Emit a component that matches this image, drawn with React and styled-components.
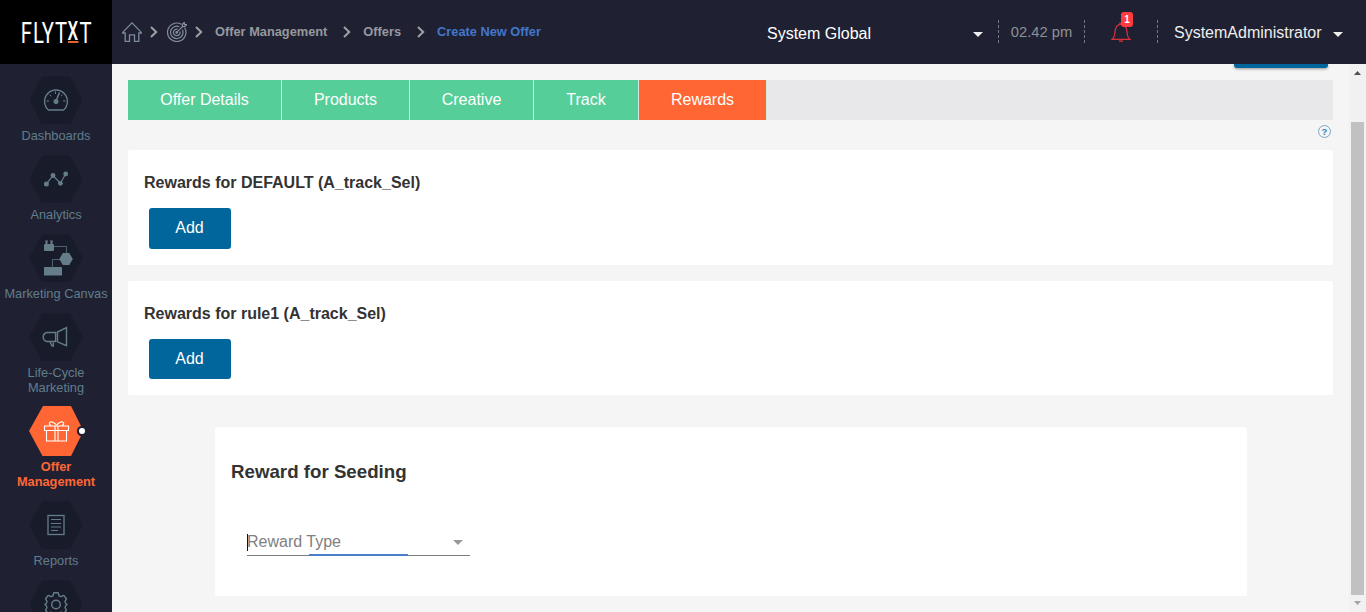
import React from "react";
import styled, { createGlobalStyle } from "styled-components";

const GlobalStyle = createGlobalStyle`
  * { box-sizing: border-box; }
  body {
    margin: 0;
    overflow: hidden;
    font-family: "Liberation Sans", Arial, sans-serif;
    font-size: 16px;
    background: #f5f5f5;
  }
  svg { display: block; flex: none; }
`;

const Page = styled.div`
  display: grid;
  grid-template: 64px 548px / 112px 1fr;
  width: 1366px;
  height: 612px;
  overflow: hidden;
`;

const LogoBox = styled.div`
  background: #000;
`;

const Header = styled.header`
  display: flex;
  align-items: center;
  background: #1f2132;
  color: #fff;
  white-space: nowrap;
`;

const Crumbs = styled.nav`
  display: flex;
  align-items: center;
  width: 655px;
  padding-left: 10px;
`;

const Crumb = styled.span`
  font-size: 12.8px;
  line-height: 16px;
  font-weight: bold;
  color: ${(p) => (p.$current ? "#4377c9" : "#97989d")};
`;

const ChevronBox = styled.span`
  display: flex;
  margin: 0 ${(p) => p.$right}px 0 ${(p) => p.$left}px;
`;

const ScopeSelect = styled.div`
  display: flex;
  align-items: center;
  justify-content: space-between;
  width: 216px;
  padding-top: 3px;
`;

const Caret = styled.span`
  width: 0;
  height: 0;
  border: 5px solid transparent;
  border-top-color: ${(p) => p.$color || "#eee"};
  border-bottom: 0;
  margin-top: ${(p) => p.$drop || 0}px;
`;

const Separator = styled.span`
  width: 1px;
  height: 24px;
  background: repeating-linear-gradient(#77787f 0 3px, transparent 3px 5px);
`;

const ClockBox = styled.div`
  display: flex;
  width: 87px;
  justify-content: space-between;
  align-items: center;
  margin-left: 15px;
`;

const Clock = styled.span`
  font-size: 14.72px;
  line-height: 18px;
  color: #8f9096;
`;

const BellBox = styled.div`
  position: relative;
  width: 20px;
  margin: 0 26px;
`;

const Badge = styled.span`
  position: absolute;
  left: 10px;
  top: -10px;
  width: 12px;
  height: 15px;
  border-radius: 3px;
  background: #ff3b3f;
  color: #fff;
  font-size: 10px;
  font-weight: bold;
  line-height: 15px;
  text-align: center;
`;

const User = styled.div`
  display: flex;
  align-items: center;
  gap: 11px;
  margin-left: 16px;
  padding-top: 1px;
  color: #eee;
`;

const Sidebar = styled.aside`
  display: flex;
  flex-direction: column;
  align-items: center;
  gap: 12px;
  padding-top: 12px;
  background: #1f2132;
  overflow: hidden;
`;

const NavItem = styled.a`
  display: flex;
  flex-direction: column;
  align-items: center;
  gap: 4px;
  flex: none;
  width: 112px;
  font-size: 12.8px;
  line-height: 15px;
  text-align: center;
  color: ${(p) => (p.$active ? "#ff6633" : "#607d8b")};
  font-weight: ${(p) => (p.$active ? "bold" : "normal")};
`;

const NavLabel = styled.span`
  white-space: pre;
`;

const Main = styled.main`
  display: flex;
  background: #f5f5f5;
  overflow: hidden;
`;

const Content = styled.div`
  flex: 1;
  display: flex;
  flex-direction: column;
  padding: 0 16px;
`;

const ActionEdge = styled.div`
  align-self: flex-end;
  width: 94px;
  height: 4px;
  margin-right: 5px;
  border-radius: 0 0 3px 3px;
  background: #00669c;
  box-shadow: 0 1px 3px rgba(0, 0, 0, 0.4);
`;

const Tabs = styled.div`
  display: flex;
  height: 40px;
  margin-top: 12px;
  background: #e8e8ea;
`;

const Tab = styled.div`
  width: ${(p) => p.$width}px;
  border-right: 1px solid #d5e8df;
  background: ${(p) => (p.$active ? "#ff6633" : "#55ce99")};
  color: #fff;
  line-height: 39px;
  text-align: center;
  white-space: nowrap;
`;

const HelpRow = styled.div`
  display: flex;
  justify-content: flex-end;
  height: 30px;
  padding: 4px 1px 0 0;
`;

const Card = styled.section`
  height: ${(p) => p.$height}px;
  margin-bottom: 16px;
  padding: 23px 16px 0;
  background: #fff;
  border-radius: 2px;
`;

const CardTitle = styled.h3`
  margin: 0;
  font-size: 16px;
  line-height: 19px;
  color: #333;
`;

const AddButton = styled.button`
  display: block;
  width: 82px;
  height: ${(p) => p.$height}px;
  margin: 16px 0 0 5px;
  padding: 0 1px 1px 0;
  border: 0;
  border-radius: 3px;
  background: #00669c;
  color: #fff;
  font: inherit;
`;

const SeedCard = styled.section`
  width: 1032px;
  height: 169px;
  margin: 16px 0 0 87px;
  padding: 33px 16px 0;
  background: #fff;
  border-radius: 2px;
`;

const SeedTitle = styled.h2`
  margin: 0;
  font-size: 18.72px;
  line-height: 24px;
  color: #333;
`;

const SelectField = styled.div`
  display: flex;
  align-items: center;
  width: 223px;
  height: 22px;
  margin: 50px 0 0 16px;
  padding-bottom: 5px;
  color: #808080;
  background:
    linear-gradient(#4a7fcb, #4a7fcb) 62px 100% / 99px 2px no-repeat,
    linear-gradient(#7d7d7d, #7d7d7d) 0 100% / 100% 1px no-repeat;
`;

const TextCursor = styled.span`
  width: 1px;
  height: 17px;
  margin-right: -1px;
  background: #111;
`;

const FieldLabel = styled.span`
  flex: 1;
  line-height: 17px;
  padding-bottom: 2px;
`;

const FieldCaret = styled(Caret)`
  margin-right: 7px;
`;

const Scrollbar = styled.div`
  display: flex;
  flex-direction: column;
  align-items: center;
  width: 17px;
  padding: 7px 0 5px;
  background: #f1f1f1;
`;

const Thumb = styled.div`
  width: 13px;
  height: 473px;
  margin: 47px 0 6px;
  background: #c1c1c1;
`;

const Logo = () => (
  <svg width="112" height="64" viewBox="0 0 112 64" fill="#fff" fontFamily="Roboto, sans-serif">
    <text transform="translate(0 43) scale(0.7 1)" fontSize="29" x="29.5 47 59.5 78.5">FLYT</text>
    <text transform="translate(67.4 40) scale(0.66 1)" fontSize="25.5" fontWeight="500">X</text>
    <text transform="translate(79.6 43) scale(0.7 1)" fontSize="29">T</text>
    <rect x="68" y="41" width="10.5" height="2" fill="#e0662f" />
  </svg>
);

const HomeIcon = () => (
  <svg width="20" height="20" viewBox="0 0 20 20" fill="none" stroke="#7d8a9c" strokeWidth="1.3">
    <path d="M.7 10.4 10 .9l9.300 9.500v.6h-2.500v8.300h-4.300v-6.500h-5v6.500H3.200V11H.7z" />
  </svg>
);

const TargetIcon = () => (
  <svg width="20" height="20" viewBox="0 0 20 20" fill="none" stroke="#858d9b" strokeWidth="1.200">
    <path d="M14.300 2.300A9.200 9.200 0 1 0 17.700 5.700M12.300 4.700A6.200 6.200 0 1 0 15.400 7.800M10.600 7.200A3.300 3.300 0 1 0 12.900 9.600" />
    <path d="M9.700 10.400 16 4.100M15.300 4.700V2.300L17.400.4v2.300h2.200L17.700 4.700z" strokeWidth="1.300" />
    <circle cx="9.700" cy="10.400" r=".8" fill="#858d9b" />
  </svg>
);

const Chevron = ({ left, right }) => (
  <ChevronBox $left={left} $right={right}>
    <svg width="8" height="12" viewBox="0 0 8 12" fill="none" stroke="#a0a1a4" strokeWidth="2">
      <path d="M1 1 6.200 6 1 11" />
    </svg>
  </ChevronBox>
);

const BellIcon = () => (
  <svg width="20" height="20" viewBox="0 0 20 20" fill="none" stroke="#d92f38" strokeWidth="1.200">
    <path d="M1 17.400c2-1.400 2.600-3.400 2.900-6.800C4.200 5.800 6.100 2.300 10 2.300s5.800 3.500 6.100 8.300c.3 3.400.9 5.400 2.900 6.800zM8.800 2.300V1h2.400v1.300" />
    <path d="M8 18.400h4v1.400H8z" fill="#d92f38" stroke="none" />
  </svg>
);

const HelpIcon = () => (
  <svg width="15" height="15" viewBox="0 0 15 15">
    <circle cx="7.500" cy="7.500" r="6" fill="none" stroke="#72a9c9" />
    <text x="7.500" y="11" textAnchor="middle" fontSize="9.500" fontWeight="bold" fill="#3481ad">?</text>
  </svg>
);

const hexPath = "M14.500 .5h25q1.500 0 2.300 1.300L53.800 24 41.800 46.700Q41 48 39.500 48h-25q-1.500 0-2.300-1.300L.2 24 12.200 1.800Q13 .5 14.500 .5z";

const Hexagon = ({ active, children }) => (
  <svg width="54" height="48" viewBox="0 0 54 48" overflow="visible" fill="none" stroke="#647d89" strokeWidth="1.200">
    {active ? (
      <path d="M14 -1h28L54.500 24 42 49H13.500L0 24z" fill="#ff6633" stroke="none" />
    ) : (
      <path d={hexPath} fill="#181b29" stroke="none" />
    )}
    {children}
  </svg>
);

const Gauge = () => (
  <g>
    <path d="M19.500 34A11.400 11.400 0 1 1 34.500 34z" strokeWidth="1.400" />
    <path d="M17.500 25h2.500M34 25h2.500M20.500 18.500l1.800 1.800M26.500 15.500v2.500M33.500 18.500l-1.500 1.600" strokeWidth="1" />
    <path d="M27 25l3.500-8.500" strokeWidth="1.600" />
    <circle cx="27" cy="25.400" r="2.500" fill="#647d89" stroke="none" />
  </g>
);

const Graph = () => (
  <g>
    <path d="M17.500 28.800 24 20.500 31.400 28.200 36.600 19" />
    <g fill="#647d89" stroke="none">
      <circle cx="17.400" cy="29" r="2.500" />
      <circle cx="24" cy="20.500" r="2.400" />
      <circle cx="31.400" cy="28.300" r="2.400" />
      <circle cx="36.700" cy="19" r="2.400" />
    </g>
  </g>
);

const Canvas = () => (
  <g>
    <path d="M24 12.500h13.500V20M31 25.500h-7.500V33" strokeWidth="1" stroke="#4e626e" />
    <g fill="#647d89" stroke="none">
      <rect x="15" y="10" width="10" height="7" rx="1" />
      <path d="M16.500 11V8l-.5-1.500h3L18.500 8v3zM21.500 11V8L21 6.500h3L23.500 8v3z" />
      <path d="M33.800 19h6.500l3.500 6-3.500 6h-6.500l-3.500-6z" />
      <rect x="15" y="33" width="18" height="8.500" rx=".6" />
    </g>
  </g>
);

const Megaphone = () => (
  <g>
    <path d="M26.600 19.500H17.800Q14.200 20.500 14.200 24t3.600 4.500h8.800zM28.500 19l9-4.300v18L28.500 28.800z" strokeWidth="1.400" />
    <path d="M20.800 28.500l2.300 4.500h1.200v-3.500" strokeWidth="1.400" />
  </g>
);

const Gift = () => (
  <g stroke="#fff" strokeWidth="1.100">
    <path d="M15.500 19h24v4.500h-24zM17.500 23.500h20V34h-20zM26 19v15M29 19v15" />
    <path d="M27.500 18.500c-2-3.500-5.500-4.400-6.800-3-1 1.300 0 2.700 1.500 3M27.500 18.500c2-3.500 5.500-4.400 6.800-3 1 1.300 0 2.700-1.500 3" />
    <circle cx="53" cy="24" r="5.200" fill="#1f2132" stroke="none" />
    <circle cx="53" cy="24" r="3" fill="#fff" stroke="none" />
  </g>
);

const Report = () => (
  <g>
    <rect x="19" y="14.500" width="16" height="19" strokeWidth="1.300" />
    <path d="M22 18.500h10M22 22.500h10M22 26h10M22 29.500h7" />
  </g>
);

const Gear = () => (
  <g strokeWidth="1.400">
    <path d="M24.800 12.800h4.400l.8 3 2 .9 2.800-1.300 2.600 3.400-1.400 2.600.5 1.700 1.500 1.400-1.500 1.500-.4 1.600 1.300 2.600-2.600 3.300-3-1.300-1.800.9-.8 2.900h-4.400l-.8-2.900-1.800-.9-3 1.300-2.600-3.300 1.300-2.600-.4-1.600-1.500-1.500 1.500-1.400.5-1.700-1.400-2.600 2.600-3.400 2.800 1.300 2-.9z" strokeLinejoin="round" />
    <circle cx="27" cy="24.500" r="4.300" />
  </g>
);

const navItems = [
  { id: "dashboards", label: "Dashboards", Icon: Gauge },
  { id: "analytics", label: "Analytics", Icon: Graph },
  { id: "canvas", label: "Marketing Canvas", Icon: Canvas },
  { id: "lifecycle", label: "Life-Cycle\nMarketing", Icon: Megaphone },
  { id: "offers", label: "Offer\nManagement", Icon: Gift, active: true },
  { id: "reports", label: "Reports", Icon: Report },
  { id: "settings", Icon: Gear },
];

const tabs = [
  { label: "Offer Details", width: 154 },
  { label: "Products", width: 128 },
  { label: "Creative", width: 124 },
  { label: "Track", width: 105 },
  { label: "Rewards", width: 128, active: true },
];

export default function App() {
  return (
    <>
      <GlobalStyle />
      <Page>
        <LogoBox>
          <Logo />
        </LogoBox>
        <Header>
          <Crumbs>
            <HomeIcon />
            <Chevron left={8} right={9} />
            <TargetIcon />
            <Chevron left={8} right={12} />
            <Crumb>Offer Management</Crumb>
            <Chevron left={16} right={12} />
            <Crumb>Offers</Crumb>
            <Chevron left={16} right={12} />
            <Crumb $current>Create New Offer</Crumb>
          </Crumbs>
          <ScopeSelect>
            System Global
            <Caret $drop={2} />
          </ScopeSelect>
          <ClockBox>
            <Separator />
            <Clock>02.42 pm</Clock>
            <Separator />
          </ClockBox>
          <BellBox>
            <BellIcon />
            <Badge>1</Badge>
          </BellBox>
          <Separator />
          <User>
            SystemAdministrator
            <Caret $drop={3} />
          </User>
        </Header>
        <Sidebar>
          {navItems.map(({ id, label, Icon, active }) => (
            <NavItem key={id} $active={active}>
              <Hexagon active={active}>
                <Icon />
              </Hexagon>
              {label && <NavLabel>{label}</NavLabel>}
            </NavItem>
          ))}
        </Sidebar>
        <Main>
          <Content>
            <ActionEdge />
            <Tabs>
              {tabs.map((t) => (
                <Tab key={t.label} $width={t.width} $active={t.active}>
                  {t.label}
                </Tab>
              ))}
            </Tabs>
            <HelpRow>
              <HelpIcon />
            </HelpRow>
            <Card $height={115}>
              <CardTitle>Rewards for DEFAULT (A_track_Sel)</CardTitle>
              <AddButton $height={41}>Add</AddButton>
            </Card>
            <Card $height={114}>
              <CardTitle>Rewards for rule1 (A_track_Sel)</CardTitle>
              <AddButton $height={40}>Add</AddButton>
            </Card>
            <SeedCard>
              <SeedTitle>Reward for Seeding</SeedTitle>
              <SelectField>
                <TextCursor />
                <FieldLabel>Reward Type</FieldLabel>
                <FieldCaret $color="#999" />
              </SelectField>
            </SeedCard>
          </Content>
          <Scrollbar>
            <svg width="7" height="4" viewBox="0 0 7 4" fill="#505050">
              <path d="M0 4 3.500 0 7 4z" />
            </svg>
            <Thumb />
            <svg width="7" height="4" viewBox="0 0 7 4" fill="#a3a3a3">
              <path d="M0 0h7L3.500 4z" />
            </svg>
          </Scrollbar>
        </Main>
      </Page>
    </>
  );
}
